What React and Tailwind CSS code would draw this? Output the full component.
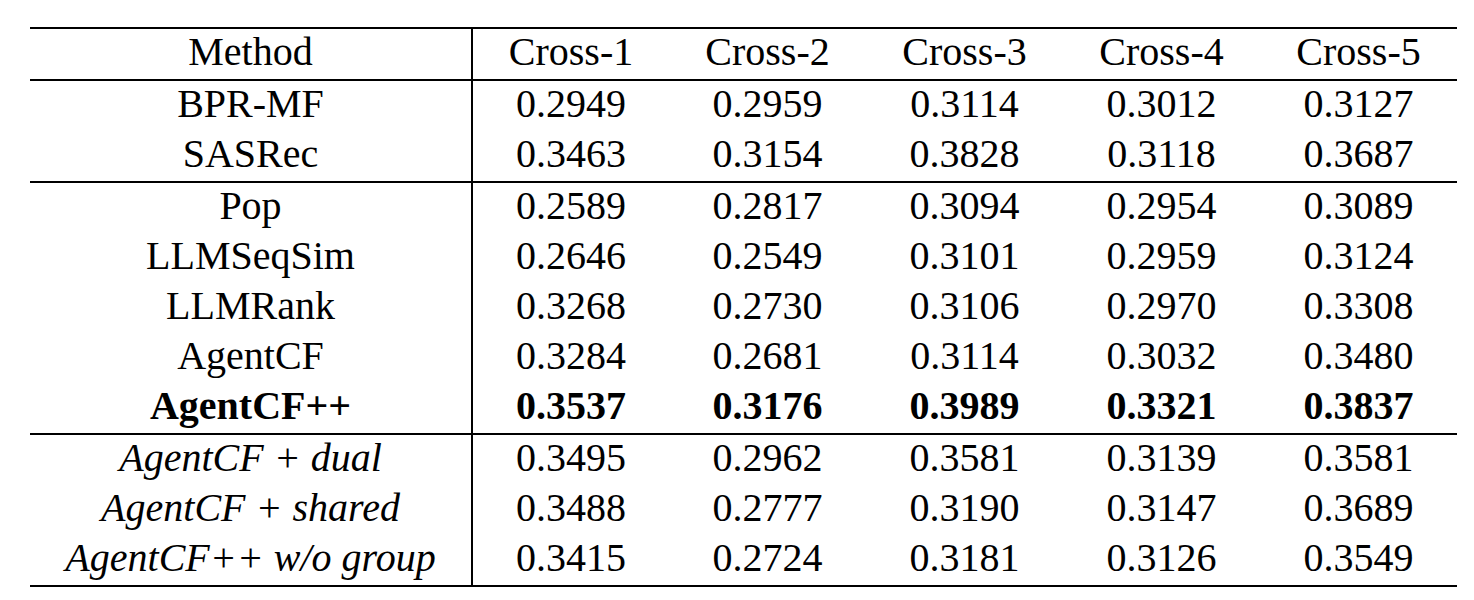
const groups = [
  [
    ['BPR-MF', ['0.2949', '0.2959', '0.3114', '0.3012', '0.3127']],
    ['SASRec', ['0.3463', '0.3154', '0.3828', '0.3118', '0.3687']],
  ],
  [
    ['Pop', ['0.2589', '0.2817', '0.3094', '0.2954', '0.3089']],
    ['LLMSeqSim', ['0.2646', '0.2549', '0.3101', '0.2959', '0.3124']],
    ['LLMRank', ['0.3268', '0.2730', '0.3106', '0.2970', '0.3308']],
    ['AgentCF', ['0.3284', '0.2681', '0.3114', '0.3032', '0.3480']],
    ['AgentCF++', ['0.3537', '0.3176', '0.3989', '0.3321', '0.3837'], 'bold'],
  ],
  [
    ['AgentCF + dual', ['0.3495', '0.2962', '0.3581', '0.3139', '0.3581'], 'italic'],
    ['AgentCF + shared', ['0.3488', '0.2777', '0.3190', '0.3147', '0.3689'], 'italic'],
    ['AgentCF++ w/o group', ['0.3415', '0.2724', '0.3181', '0.3126', '0.3549'], 'italic'],
  ],
]

const headers = ['Cross-1', 'Cross-2', 'Cross-3', 'Cross-4', 'Cross-5']

export default function App() {
  return (
    <div className="w-[1474px] h-[600px] bg-white pt-[27px] pl-[30px] font-['Liberation_Serif',serif] text-black">
      <table className="table-fixed border-collapse w-[1427px] text-[40px] leading-[46px]">
        <colgroup>
          <col className="w-[442px]" />
          {headers.map((h) => (
            <col key={h} className="w-[197px]" />
          ))}
        </colgroup>
        <thead className="border-y-2 border-black">
          <tr className="h-[51px]">
            <th className="font-normal text-center border-r-2 border-black p-0 pb-[4px]">Method</th>
            {headers.map((h) => (
              <th key={h} className="font-normal text-center p-0 pb-[4px]">{h}</th>
            ))}
          </tr>
        </thead>
        {groups.map((rows, gi) => (
          <tbody key={gi} className="border-b-2 border-black">
            {rows.map(([name, vals, style]) => (
              <tr key={name} className="h-[50px]">
                <td
                  className={`text-center border-r-2 border-black p-0 pb-[4px] ${
                    style === 'bold' ? 'font-bold' : style === 'italic' ? 'italic' : ''
                  }`}
                >
                  {name}
                </td>
                {vals.map((v, i) => (
                  <td key={i} className={`text-center p-0 pb-[4px] ${style === 'bold' ? 'font-bold' : ''}`}>
                    {v}
                  </td>
                ))}
              </tr>
            ))}
          </tbody>
        ))}
      </table>
    </div>
  )
}
